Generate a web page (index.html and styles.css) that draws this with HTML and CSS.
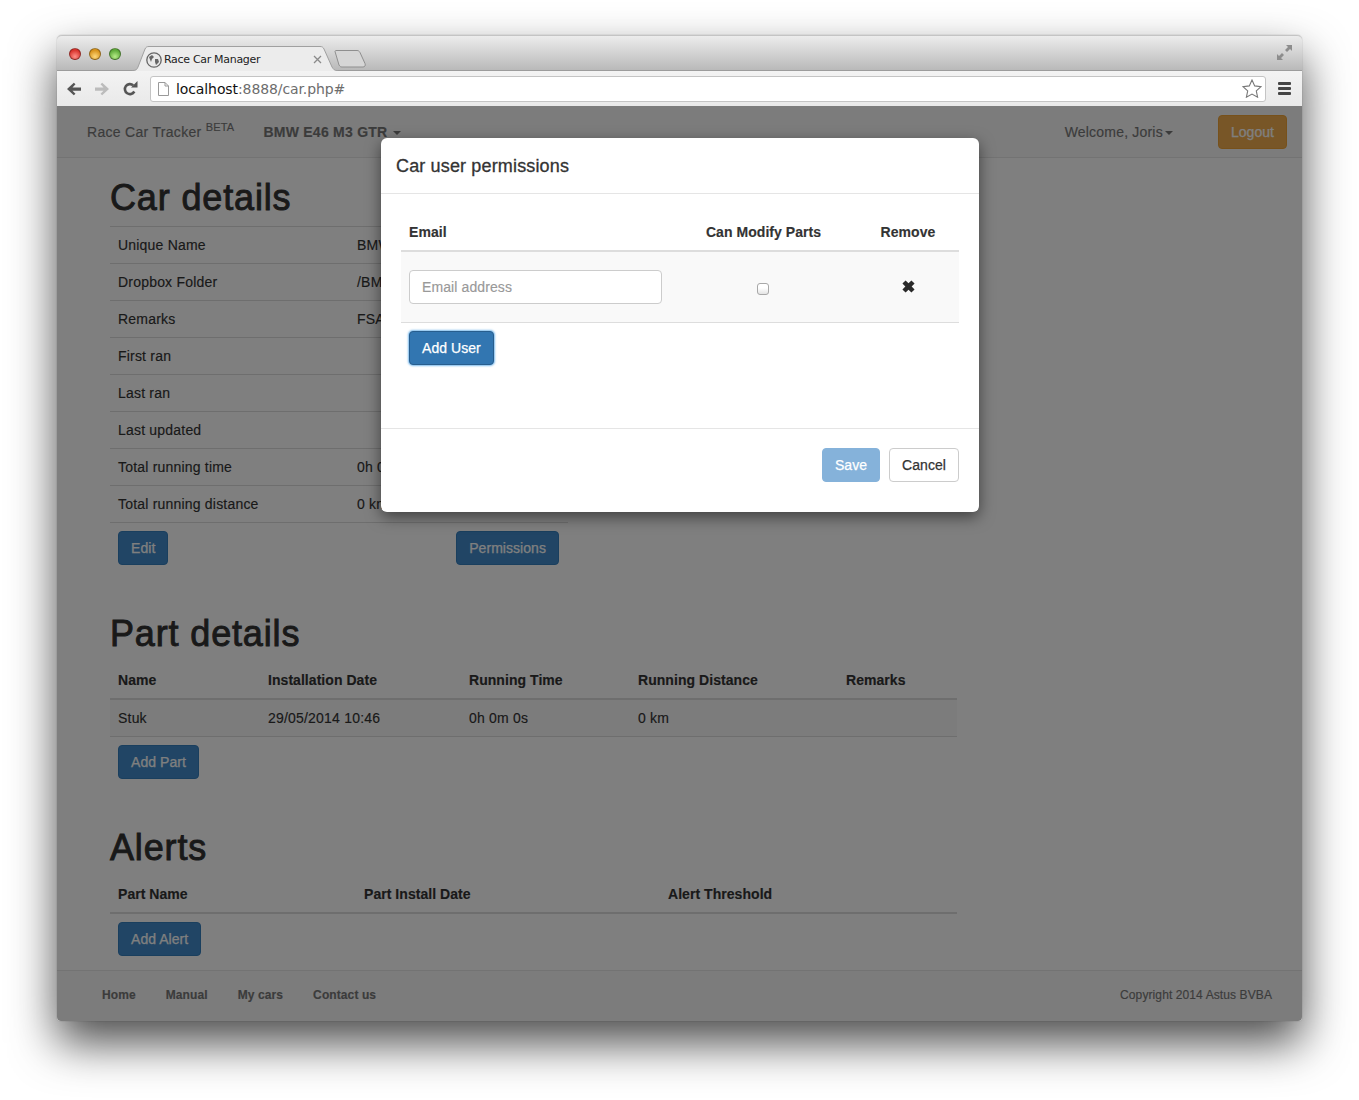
FILE: index.html
```html
<!DOCTYPE html>
<html lang="en">
<head>
<meta charset="utf-8">
<title>Race Car Manager</title>
<link rel="stylesheet" href="styles.css">
</head>
<body>
<div class="window">
  <div class="titlebar">
    <div class="lights"><i class="light red"></i><i class="light yellow"></i><i class="light green"></i></div>
    <div class="tab">
      <svg class="tab-shape" width="206" height="25" viewBox="0 0 206 25"><path d="M0 24.500h1c3 0 4-1 5-3.500L13 3c1-2 2-2.500 4-2.500h171c2 0 3 .5 4 2.500l8 18c1.500 2.500 2.500 3.500 5 3.500h1V25H0z" fill="#ececec"/><path d="M0 24.500h1c3 0 4-1 5-3.500L13 3c1-2 2-2.500 4-2.500h171c2 0 3 .5 4 2.500l8 18c1.500 2.500 2.500 3.500 5 3.500h1" fill="none" stroke="#a0a0a0"/></svg>
      <svg class="favicon" width="16" height="16" viewBox="0 0 16 16"><circle cx="8" cy="8" r="7.200" fill="#e8e8e8" stroke="#666" stroke-width="1.300"/><path d="M3 5l3-2 2 2-2 2-1 3zM9 7l3 0 1 3-3 3-1-3z" fill="#666"/></svg>
      <span class="tab-title">Race Car Manager</span>
      <svg class="tab-close" width="9" height="9" viewBox="0 0 9 9"><path d="M1 1l7 7M8 1L1 8" stroke="#8a8a8a" stroke-width="1.300"/></svg>
    </div>
    <svg class="newtab" width="33" height="18" viewBox="0 0 33 18"><path d="M1 1.500c0-.5.500-1 1-1h21c1.500 0 2 .5 3 2l5 11c.7 2 0 3.500-2 3.500H8c-1.500 0-2-.5-3-2z" fill="#d6d6d6" stroke="#8f8f8f"/></svg>
    <svg class="fullscreen" width="15" height="15" viewBox="0 0 15 15"><path d="M9 0h6v6l-2-2-3 3-2-2 3-3zM0 9l2 2 3-3 2 2-3 3 2 2H0z" fill="#8d8d8d"/></svg>
  </div>
  <div class="toolbar">
    <svg class="tool" width="16" height="14" viewBox="0 0 16 14"><path d="M15 5.500H6.500L9.500 2.300 7.800.8 1 7l6.800 6.200 1.700-1.500-3-3H15z" fill="#555"/></svg>
    <svg class="tool" width="16" height="14" viewBox="0 0 16 14"><path d="M1 5.500h8.500L6.500 2.300 8.200.8 15 7l-6.800 6.200-1.700-1.500 3-3H1z" fill="#bcbcbc"/></svg>
    <svg class="tool" width="16" height="16" viewBox="0 0 16 16"><path d="M12.300 10.500A5 5 0 1 1 11.200 4.300" fill="none" stroke="#555" stroke-width="2.600"/><path d="M9 6.500h6.500V0z" fill="#555"/></svg>
    <div class="omnibox">
      <svg class="page-icon" width="11" height="14" viewBox="0 0 11 14"><path d="M.5.500h6.500l3.500 3.500v9.500H.500zM7 .5V4h3.500" fill="#fff" stroke="#9a9a9a"/></svg>
      <span class="url"><span class="host">localhost</span>:8888/car.php#</span>
      <svg class="star" width="20" height="19" viewBox="0 0 20 19"><path d="M10 1l2.700 5.900 6.300.7-4.700 4.300 1.300 6.300L10 15.100 4.400 18.200l1.300-6.300L1 7.600l6.300-.7z" fill="#fff" stroke="#777" stroke-width="1.100"/></svg>
    </div>
    <div class="hamburger"><i></i><i></i><i></i></div>
  </div>
  <div class="page">
    <nav class="navbar">
      <span class="brand">Race Car Tracker <sup class="beta">BETA</sup></span>
      <span class="nav-car">BMW E46 M3 GTR<i class="caret caret-wide"></i></span>
      <span class="nav-user">Welcome, Joris<i class="caret"></i></span>
      <button class="btn btn-warning" type="button">Logout</button>
    </nav>
    <main class="content">
      <section class="section-car">
        <h1>Car details</h1>
        <table class="table table-car">
          <colgroup><col class="c-car-label"><col></colgroup>
          <tbody>
            <tr><td>Unique Name</td><td>BMW E46 M3 GTR</td></tr>
            <tr><td>Dropbox Folder</td><td>/BMW E46 M3 GTR</td></tr>
            <tr><td>Remarks</td><td>FSA</td></tr>
            <tr><td>First ran</td><td></td></tr>
            <tr><td>Last ran</td><td></td></tr>
            <tr><td>Last updated</td><td></td></tr>
            <tr><td>Total running time</td><td>0h 0m 0s</td></tr>
            <tr><td>Total running distance</td><td>0 km</td></tr>
          </tbody>
        </table>
        <div class="actions actions-split">
          <button class="btn btn-primary" type="button">Edit</button>
          <button class="btn btn-primary" type="button">Permissions</button>
        </div>
      </section>
      <section class="section-part">
        <h1>Part details</h1>
        <table class="table table-head">
          <colgroup><col class="c-p1"><col class="c-p2"><col class="c-p3"><col class="c-p4"><col></colgroup>
          <thead><tr><th>Name</th><th>Installation Date</th><th>Running Time</th><th>Running Distance</th><th>Remarks</th></tr></thead>
          <tbody><tr class="striped"><td>Stuk</td><td>29/05/2014 10:46</td><td>0h 0m 0s</td><td>0 km</td><td></td></tr></tbody>
        </table>
        <div class="actions"><button class="btn btn-primary" type="button">Add Part</button></div>
      </section>
      <section class="section-alerts">
        <h1>Alerts</h1>
        <table class="table table-head">
          <colgroup><col class="c-a1"><col class="c-a2"><col></colgroup>
          <thead><tr><th>Part Name</th><th>Part Install Date</th><th>Alert Threshold</th></tr></thead>
        </table>
        <div class="actions"><button class="btn btn-primary" type="button">Add Alert</button></div>
      </section>
    </main>
    <footer class="footer">
      <a class="foot-link">Home</a>
      <a class="foot-link">Manual</a>
      <a class="foot-link">My cars</a>
      <a class="foot-link">Contact us</a>
      <span class="copyright">Copyright 2014 Astus BVBA</span>
    </footer>
    <div class="backdrop"></div>
    <div class="modal">
      <div class="modal-header"><h4>Car user permissions</h4></div>
      <div class="modal-body">
        <table class="table table-head table-modal">
          <colgroup><col class="c-m1"><col class="c-m2"><col class="c-m3"></colgroup>
          <thead><tr><th>Email</th><th class="center">Can Modify Parts</th><th class="center">Remove</th></tr></thead>
          <tbody>
            <tr class="striped">
              <td><input class="input" type="text" placeholder="Email address"></td>
              <td class="center"><input class="check" type="checkbox"></td>
              <td class="center"><svg class="remove" width="13" height="13" viewBox="0 0 12 12"><path d="M3.300.4L6 3.100 8.700.4l2.900 2.900L8.900 6l2.700 2.700-2.900 2.900L6 8.900l-2.700 2.700L.4 8.700 3.100 6 .4 3.300z" fill="#2a2a2a"/></svg></td>
            </tr>
          </tbody>
        </table>
        <div class="actions"><button class="btn btn-primary btn-focus" type="button">Add User</button></div>
      </div>
      <div class="modal-footer">
        <button class="btn btn-primary btn-disabled" type="button">Save</button>
        <button class="btn btn-default" type="button">Cancel</button>
      </div>
    </div>
  </div>
</div>
</body>
</html>
```

FILE: styles.css
```css
* { box-sizing: border-box; }
html, body { margin: 0; height: 1100px; background: #fff; overflow: hidden; }
body { padding: 35px 57px 0; font: 14px/20px "Liberation Sans", Arial, sans-serif; color: #333; }

.window {
  width: 1245px; height: 986px; display: flex; flex-direction: column;
  border-radius: 5px 5px 4px 4px;
  box-shadow: 0 22px 46px rgba(0,0,0,.7), 0 0 1px rgba(0,0,0,.5);
}

/* browser chrome */
.titlebar {
  height: 36px; flex: none; display: flex; align-items: flex-end;
  position: relative; padding-left: 75px;
  border-radius: 5px 5px 0 0;
  border-top: 1px solid #c4c4c4;
  border-bottom: 1px solid #9c9c9c;
  background: linear-gradient(#ececec, #b9b9b9);
}
.lights { position: absolute; left: 12px; top: 12px; display: flex; gap: 8px; }
.light { width: 12px; height: 12px; border-radius: 50%; border: 1px solid rgba(0,0,0,.35); }
.red { background: radial-gradient(circle at 50% 75%, #ff8f87, #d8332c 70%); }
.yellow { background: radial-gradient(circle at 50% 75%, #ffd87a, #d8931c 70%); }
.green { background: radial-gradient(circle at 50% 75%, #b6ec88, #5eaa3a 70%); }
.tab { position: relative; width: 206px; height: 25px; flex: none; margin-bottom: -1px; display: flex; align-items: center; padding: 1px 0 0 14px; }
.tab-shape { position: absolute; left: 0; top: 0; }
.favicon { position: relative; margin-top: 1px; flex: none; }
.tab-title { position: relative; font: 11px/14px "DejaVu Sans", sans-serif; letter-spacing: -.31px; color: #222; margin: 2px 0 0 2px; }
.tab-close { position: absolute; left: 181px; top: 9px; }
.newtab { margin: 0 0 2px -4px; flex: none; }
.fullscreen { position: absolute; right: 10px; top: 9px; }

.toolbar {
  height: 35px; flex: none; display: flex; align-items: center; padding: 0 10px 0 9px;
  background: linear-gradient(#f3f3f3, #e9e9e9);
}
.tool { flex: none; margin-right: 12px; }
.omnibox {
  width: 1116px; height: 26px; flex: none; display: flex; align-items: center;
  padding: 0 3px 0 7px; background: #fff;
  border: 1px solid #c4c4c4; border-radius: 3px;
}
.page-icon { flex: none; }
.url { font: 14px/18px "DejaVu Sans", sans-serif; color: #6d6d6d; margin-left: 7px; flex: 1; letter-spacing: -.1px; }
.host { color: #111; }
.star { flex: none; }
.hamburger { margin-left: 12px; display: flex; flex-direction: column; gap: 2px; }
.hamburger i { display: block; width: 13px; height: 3px; background: #444; border-radius: 1px; }

/* page */
.page { position: relative; flex: 1; display: flex; flex-direction: column; background: #fff; border-radius: 0 0 4px 4px; overflow: hidden; letter-spacing: .2px; -webkit-text-stroke: .15px; }
.navbar {
  height: 52px; flex: none; display: flex; align-items: center;
  padding: 0 15px 0 30px; background: #f8f8f8; border-bottom: 1px solid #e7e7e7; color: #777;
}
.brand { letter-spacing: .3px; }
.beta { font-size: 11px; line-height: 0; letter-spacing: .2px; }
.nav-car { font-weight: 700; margin-left: 29px; flex: 1; letter-spacing: .25px; }
.nav-user { margin-right: 45px; letter-spacing: .2px; }
.caret { display: inline-block; margin-left: 2px; vertical-align: middle; border-top: 4px solid; border-left: 4px solid transparent; border-right: 4px solid transparent; }
.caret-wide { margin-left: 6px; }

.content { flex: 1; padding: 0 53px; }
h1 { margin: 0; font-size: 36px; line-height: 40px; font-weight: 500; color: #333; letter-spacing: .85px; -webkit-text-stroke: .9px; }
.section-car { padding-top: 20px; }
.section-car h1 { margin-bottom: 8px; }
.section-part { padding-top: 49px; }
.section-part h1 { margin-bottom: 8px; }
.section-alerts { padding-top: 49px; }
.section-alerts h1 { margin-bottom: 8px; }

.table { border-collapse: collapse; table-layout: fixed; width: 847px; }
.table-car { width: 458px; }
.table td, .table th { padding: 8px; text-align: left; vertical-align: middle; }
.table-car td { border-top: 1px solid #ddd; border-bottom: 1px solid #ddd; padding: 8px; height: 37px; white-space: nowrap; overflow: hidden; }
.table-head th { font-weight: 700; border-bottom: 2px solid #ddd; height: 37px; letter-spacing: .05px; }
.table-head td { border-bottom: 1px solid #ddd; height: 37px; }
.striped { background: #f9f9f9; }
.table .center { text-align: center; }
.c-car-label { width: 239px; }
.c-p1 { width: 150px; } .c-p2 { width: 201px; } .c-p3 { width: 169px; } .c-p4 { width: 208px; }
.c-a1 { width: 246px; } .c-a2 { width: 304px; }

.actions { padding: 8px 8px 0; display: flex; }
.actions-split { width: 458px; justify-content: space-between; padding-right: 9px; }
.btn {
  height: 34px; padding: 6px 12px; font: 14px/20px "Liberation Sans", Arial, sans-serif;
  letter-spacing: .05px; border: 1px solid transparent; border-radius: 4px; white-space: nowrap;
  -webkit-text-stroke: .25px;
}
.btn-primary { background: #428bca; border-color: #357ebd; color: #fff; }
.btn-warning { background: #f0ad4e; border-color: #eea236; color: #fff; }
.btn-default { background: #fff; border-color: #ccc; color: #333; }
.btn-focus { background: #3276b1; border-color: #285e8e; box-shadow: 0 0 2px 1px rgba(102,175,233,.85); }
.btn-disabled { background: #85b2da; border-color: #85b2da; }

/* footer */
.footer {
  height: 51px; flex: none; display: flex; align-items: center; gap: 30px;
  padding: 0 30px 2px 45px; background: #f8f8f8; border-top: 1px solid #e7e7e7;
  font-size: 12px; color: #777; letter-spacing: .1px;
}
.foot-link { font-weight: 700; }
.copyright { margin-left: auto; }

/* modal layer */
.backdrop { position: absolute; inset: 0; background: rgba(0,0,0,.5); }
.modal {
  position: absolute; left: 324px; top: 32px; width: 598px; height: 374px;
  display: flex; flex-direction: column; background: #fff; border-radius: 6px;
  box-shadow: 0 5px 15px rgba(0,0,0,.5);
}
.modal-header { height: 56px; flex: none; padding: 0 15px; display: flex; align-items: center; border-bottom: 1px solid #e5e5e5; }
.modal-header h4 { margin: 0; font-size: 18px; line-height: 20px; font-weight: 500; color: #333; -webkit-text-stroke: .3px; letter-spacing: .15px; }
.modal-body { flex: 1; padding: 20px 20px 0; }
.table-modal { width: 558px; }
.table-modal td { height: 71px; }
.c-m1 { width: 269px; } .c-m2 { width: 187px; } .c-m3 { width: 102px; }
.input {
  display: block; width: 253px; height: 34px; padding: 6px 12px; margin-top: 1px;
  font: 14px/20px "Liberation Sans", Arial, sans-serif; letter-spacing: .1px; color: #555;
  background: #fff; border: 1px solid #ccc; border-radius: 4px;
}
.input::placeholder { color: #999; opacity: 1; }
.check {
  appearance: none; display: inline-block; margin: 2px 1px 0 0; width: 12px; height: 12px; vertical-align: middle;
  border: 1px solid #a8a8a8; border-radius: 3px; background: linear-gradient(#fff 40%, #e4e4e4);
}
.remove { display: block; margin: 0 auto; }
.modal-footer { height: 84px; flex: none; padding: 19px 20px 0; display: flex; justify-content: flex-end; gap: 9px; border-top: 1px solid #e5e5e5; }
```
